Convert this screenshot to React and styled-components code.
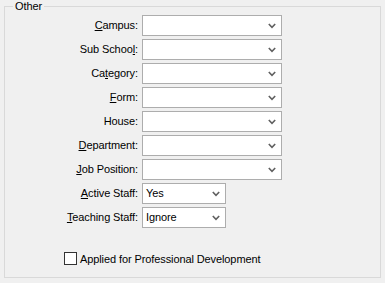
import React from 'react';
import styled, { createGlobalStyle } from 'styled-components';

const GlobalStyle = createGlobalStyle`
  html, body {
    margin: 0;
    padding: 0;
    background: #f0f0f0;
    font-family: "Liberation Sans", Arial, sans-serif;
    font-size: 11px;
    letter-spacing: -0.1px;
    color: #000;
  }
`;

const fields = [
  { label: 'Campus', key: 0 },
  { label: 'Sub School', key: 9 },
  { label: 'Category', key: 2 },
  { label: 'Form', key: 0 },
  { label: 'House', key: -1 },
  { label: 'Department', key: 0 },
  { label: 'Job Position', key: 0 },
  { label: 'Active Staff', key: 0, value: 'Yes', small: true },
  { label: 'Teaching Staff', key: 0, value: 'Ignore', small: true },
];

function Mnemonic({ text, index }) {
  if (index < 0) return text;
  return (
    <>
      {text.slice(0, index)}
      <u>{text[index]}</u>
      {text.slice(index + 1)}
    </>
  );
}

function Chevron() {
  return (
    <svg width="8" height="6" viewBox="0 0 8 6">
      <polyline points="0.8,1 4,4.3 7.2,1" fill="none" stroke="#606060" strokeWidth="1.6" />
    </svg>
  );
}

export default function App() {
  return (
    <Page>
      <GlobalStyle />
      <Group>
        <Legend>Other</Legend>
        <Form>
          {fields.map((f) => (
            <React.Fragment key={f.label}>
              <Label>
                <Mnemonic text={f.label} index={f.key} />:
              </Label>
              <Combo $small={f.small}>
                <span>{f.value || ''}</span>
                <Chevron />
              </Combo>
            </React.Fragment>
          ))}
        </Form>
        <CheckRow>
          <Box />
          <span>Applied for Professional Development</span>
        </CheckRow>
      </Group>
    </Page>
  );
}

const Page = styled.div`
  width: 385px;
  height: 283px;
  padding: 6px 0 0 4px;
  box-sizing: border-box;
`;

const Group = styled.div`
  position: relative;
  width: 377px;
  height: 272px;
  box-sizing: border-box;
  border: 1px solid #d9d9d9;
  padding: 8px 0 0 0;
`;

const Legend = styled.span`
  position: absolute;
  top: -7px;
  left: 8px;
  padding: 0 2px;
  background: #f0f0f0;
  line-height: 13px;
`;

const Form = styled.div`
  display: grid;
  grid-template-columns: 137px auto;
  row-gap: 3px;
  justify-items: start;
`;

const Label = styled.div`
  justify-self: stretch;
  text-align: right;
  padding-right: 4px;
  height: 21px;
  line-height: 21px;
  white-space: nowrap;
`;

const Combo = styled.div`
  width: ${(p) => (p.$small ? '84px' : '140px')};
  height: 21px;
  box-sizing: border-box;
  border: 1px solid #adadad;
  background: #fff;
  display: flex;
  align-items: center;
  justify-content: space-between;
  padding: 0 5px 0 3px;
  line-height: 19px;
`;

const CheckRow = styled.div`
  display: flex;
  align-items: center;
  gap: 3px;
  margin: 24px 0 0 59px;
`;

const Box = styled.div`
  width: 13px;
  height: 13px;
  box-sizing: border-box;
  border: 1px solid #333;
  background: #fff;
`;
